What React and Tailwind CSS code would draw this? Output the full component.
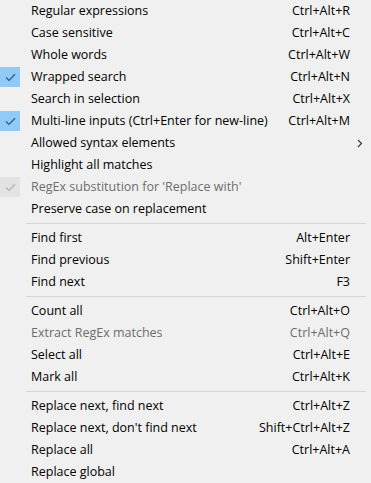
import React from 'react';

const groups = [
  [
    { label: 'Regular expressions', key: 'Ctrl+Alt+R' },
    { label: 'Case sensitive', key: 'Ctrl+Alt+C' },
    { label: 'Whole words', key: 'Ctrl+Alt+W' },
    { label: 'Wrapped search', key: 'Ctrl+Alt+N', checked: true },
    { label: 'Search in selection', key: 'Ctrl+Alt+X' },
    { label: 'Multi-line inputs (Ctrl+Enter for new-line)', key: 'Ctrl+Alt+M', checked: true },
    { label: 'Allowed syntax elements', submenu: true },
    { label: 'Highlight all matches' },
    { label: "RegEx substitution for 'Replace with'", checked: true, disabled: true },
    { label: 'Preserve case on replacement' },
  ],
  [
    { label: 'Find first', key: 'Alt+Enter' },
    { label: 'Find previous', key: 'Shift+Enter' },
    { label: 'Find next', key: 'F3' },
  ],
  [
    { label: 'Count all', key: 'Ctrl+Alt+O' },
    { label: 'Extract RegEx matches', key: 'Ctrl+Alt+Q', disabled: true },
    { label: 'Select all', key: 'Ctrl+Alt+E' },
    { label: 'Mark all', key: 'Ctrl+Alt+K' },
  ],
  [
    { label: 'Replace next, find next', key: 'Ctrl+Alt+Z' },
    { label: "Replace next, don't find next", key: 'Shift+Ctrl+Alt+Z' },
    { label: 'Replace all', key: 'Ctrl+Alt+A' },
    { label: 'Replace global' },
  ],
];

const Check = ({ disabled }) => (
  <div
    className={`w-[20px] h-[20px] flex items-center justify-center ${
      disabled ? 'bg-[#e3e3e3]' : 'bg-[#91c9f7]'
    }`}
  >
    <svg width="11" height="9" viewBox="0 0 11 9" fill="none">
      <path
        d="M1 4.6 L4 7.4 L10 1.2"
        stroke={disabled ? '#b4b4b4' : '#2d5d8a'}
        strokeWidth="1.3"
      />
    </svg>
  </div>
);

const MenuItem = ({ item }) => (
  <div
    className={`flex items-center h-[22px] ${
      item.disabled ? 'text-[#6d6d6d]' : 'text-black'
    }`}
  >
    <div className="w-[31px] h-full flex items-center">
      {item.checked && <Check disabled={item.disabled} />}
    </div>
    <span className="flex-1 whitespace-nowrap">{item.label}</span>
    {item.key && <span className="pr-[21px] whitespace-nowrap">{item.key}</span>}
    {item.submenu && (
      <span className="pr-[8px]">
        <svg width="6" height="9" viewBox="0 0 6 9" fill="none">
          <path d="M1 1 L4.5 4.5 L1 8" stroke="#333" strokeWidth="1.1" />
        </svg>
      </span>
    )}
  </div>
);

const Separator = () => (
  <div className="h-[7px] flex items-center pl-[26px] pr-[5px]">
    <div className="h-px w-full bg-[#d7d7d7]" />
  </div>
);

export default function App() {
  return (
    <div
      className="w-[371px] h-[483px] bg-[#f0f0f0] text-[12.5px] overflow-hidden"
      style={{ fontFamily: '"Open Sans", "Noto Sans", sans-serif' }}
    >
      {groups.map((group, i) => (
        <div key={i}>
          {i > 0 && <Separator />}
          {group.map((item) => (
            <MenuItem key={item.label} item={item} />
          ))}
        </div>
      ))}
    </div>
  );
}
